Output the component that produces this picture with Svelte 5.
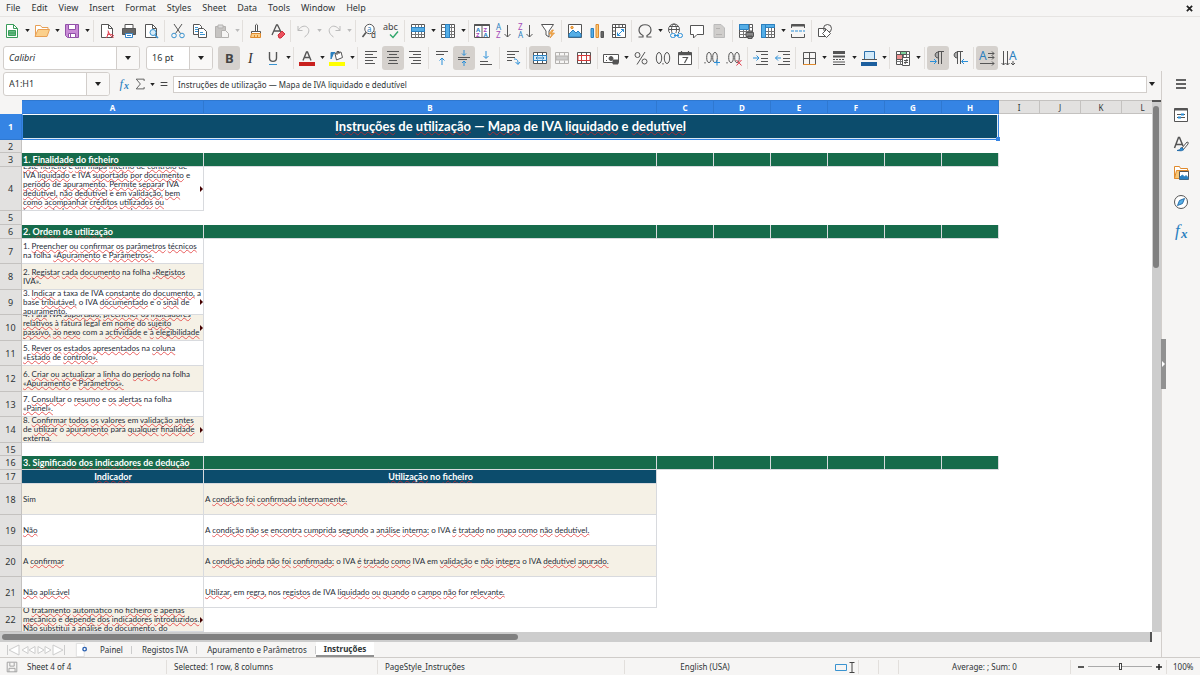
<script lang="ts">
	type Tool = {
		icon: string;
		label: string;
		menu?: boolean;
		pressed?: boolean;
		disabled?: boolean;
		gap?: 'wide' | 'tight';
	};
	type Row = { n: number; h: number; kind: string; a?: string[]; b?: string; more?: boolean };

	const menus = ['File', 'Edit', 'View', 'Insert', 'Format', 'Styles', 'Sheet', 'Data', 'Tools', 'Window', 'Help'];

	const page = '<path d="M2.5 1.5h7l4 4v9h-11z" fill="#fff"/><path d="M9.5 1.5v4h4"/>';
	const table = '<path d="M1.5 1.5h13v13h-13z" fill="#fff"/><path d="M1.5 4.5h13M1.5 8.5h13M1.5 11.5h13M5.5 1.5v13M8.5 1.5v13M11.5 1.5v13" stroke="#777"/>';
	const merge = '<path d="M1.5 2.5h13v11h-13z" fill="#fff"/><path d="M1.5 5.5h13M1.5 10.5h13M5.5 2.5v3M10.5 2.5v3M5.5 10.5v3M10.5 10.5v3"/>';
	const pilcrow = '<path d="M8.5 14V2M11.5 14V2M14 1.5H8"/><path d="M8.5 2C4 2 4 8 8.5 8z" fill="#aaa"/>';

	const icons: Record<string, string> = {
		new: '<g stroke="#3a9c5a"><path d="M2.5 1.5h7l4 4v9h-11z" fill="#fff"/><path d="M9.5 1.5v4h4"/><path d="M4.5 7.5h7v5h-7zM4.5 10h7" fill="#63bb80"/></g>',
		open: '<path d="M1.5 13.5v-11h5l1.5 2h6v3" stroke="#e8a055" fill="#fff"/><path d="M1 13.500l3-7h11.500l-2.500 7z" stroke="#e8a055" fill="#fbd08c"/>',
		save: '<g stroke="#9150a8"><path d="M1.5 1.5h13v13h-11l-2-2z" fill="#c98bd6"/><path d="M4.5 1.5h7v5h-7z" fill="#fff"/><path d="M4.5 14.5v-4h7v4z" fill="#fff"/><path d="M6.5 11v3"/></g>',
		pdf: page + '<path d="M7 15c2-2 3-6 2-7.500M8 12c2-1 5-1 7 1M9.500 9c1 3 3 5 5 5.500" stroke="#e0394a"/>',
		print: '<path d="M4 5V1.500h8V5" fill="#fff"/><path d="M1.500 5.500h13v6h-13z" fill="#666"/><path d="M4.500 10.500h7v4h-7z" fill="#fff" stroke="#3584c8"/><path d="M6 12.500h4" stroke="#3584c8"/>',
		preview: page + '<circle cx="10" cy="9.500" r="3" fill="#d8ecf8" stroke="#3a93d0"/><path d="M12 12l3 3" stroke="#3a93d0" stroke-width="1.600"/>',
		cut: '<path d="M4 1l6.500 9.500M12 1L5.500 10.500"/><circle cx="4" cy="12.500" r="2.300" stroke="#3a93d0"/><circle cx="12" cy="12.500" r="2.300" stroke="#3a93d0"/>',
		copy: '<path d="M1.500 1.500h6l2 2v8h-8z" fill="#fff"/><path d="M6.500 5.500h5l3 3v6h-8z" fill="#fff"/><path d="M3 4.500h3M3 6.500h3M3 8.500h3M8 9.500h3M8 11.500h5" stroke="#3a93d0"/>',
		paste: '<g stroke="#b4b2b0"><path d="M1.500 3.500h10v11h-10z" fill="#c6c4c2"/><path d="M4 2h5v3H4z" fill="#ddd"/><path d="M7.500 7.500h4l3 3v4h-7z" fill="#f6f5f4"/></g>',
		brush: '<path d="M7.500 8V2q1-1.500 2 0v6M3.500 8.500h9v2h-9z" fill="#fff"/><path d="M3.500 10.500h9v4h-10z" fill="#fbd08c" stroke="#e08a2c"/><path d="M6.500 12v2M9.500 12v2" stroke="#e08a2c"/>',
		clear: '<path d="M2 12L6.500 2h1L11 9M4 8h6" stroke-width="1.300"/><path d="M8 12l4-4 3 3-4 4H9z" fill="#ec5360" stroke="#cf2f3b"/>',
		undo: '<path d="M2 3v4.500h4.500M2 7.500C5 3 9 2 11.500 4.500S13 11 8.500 14" stroke="#bbb"/>',
		redo: '<path d="M14 3v4.500H9.500M14 7.500C11 3 7 2 4.500 4.500S3 11 7.500 14" stroke="#bbb"/>',
		find: '<circle cx="8.500" cy="6" r="4.700" fill="#fff"/><path d="M5 9.500L1.500 14" stroke-width="1.600"/><text x="6" y="8.500" font-size="8" fill="#2a80c0">a</text><text x="10" y="15" font-size="8" fill="#444">d</text>',
		spell: '<text x="0" y="7" font-size="9" fill="#444">abc</text><path d="M7 11.500l3 3 5-6" stroke="#2fa56a" stroke-width="1.400"/>',
		rows: table + '<path d="M1.500 4.500h13v4h-13z" fill="#55aee6" stroke="#2a80c0"/>',
		cols: table + '<path d="M5.500 1.500h4v13h-4z" fill="#55aee6" stroke="#2a80c0"/>',
		sort: '<path d="M.5 1.500h15v13H.5zM8 2v12" fill="#fff"/><path d="M.5 2h15" stroke-width="2"/><g font-size="6" font-weight="bold"><text x="2" y="9" fill="#2a80c0">A</text><text x="2" y="14" fill="#a44bb8">Z</text><text x="9.500" y="9" fill="#a44bb8">Z</text><text x="9.500" y="14" fill="#2a80c0">A</text></g>',
		asc: '<text x="0" y="7" font-size="8" fill="#2a80c0">A</text><text x="0" y="15" font-size="8" fill="#a44bb8">Z</text><path d="M11.500 2v12M8.500 11l3 3 3-3"/>',
		desc: '<text x="0" y="7" font-size="8" fill="#a44bb8">Z</text><text x="0" y="15" font-size="8" fill="#2a80c0">A</text><path d="M11.500 2v12M8.500 11l3 3 3-3"/>',
		filter: '<path d="M1.500 1.500h12L9 8v6l-3-2V8z" fill="#fff"/><path d="M12 7l-3 4h3l-2 4 4.500-5h-3l2-3z" fill="#f8b75c" stroke="#e08a2c" stroke-width=".7"/>',
		image: '<path d="M1.500 1.500h13v13h-13z" fill="#fff"/><path d="M2 14v-3l4-4 3 3 2-2 3 3v3z" fill="#55aee6" stroke="#2a80c0"/><circle cx="5" cy="4.500" r="1.200" fill="#f8b75c" stroke="#e08a2c"/>',
		chart: '<path d="M2 5.500h2.500v9H2z" fill="#55aee6" stroke="#2a80c0"/><path d="M7 1.500h2.500v13H7z" fill="#f8c878" stroke="#e08a2c"/><path d="M12 8.500h2.500v6H12z" fill="#666"/>',
		pivot: '<path d="M1.500 1.500h13v13h-13z" fill="#fff"/><path d="M1.500 4.500h13M4.500 1.500v13M8 2v2M11.500 2v2M2 8h2M2 11.500h2"/><path d="M6.500 9.500v3h3M10 6.500h2.500V9M6.500 12.500l6-6" stroke="#2a8fd8"/>',
		omega: '<path d="M1.500 14H6v-1.500C3 11 2 9 2 7c0-7 12-7 12 0 0 2-1 4-4 5.500V14h4.500" stroke-width="1.200"/>',
		link: '<circle cx="7" cy="6.500" r="5.500" fill="#fff"/><ellipse cx="7" cy="6.500" rx="2.500" ry="5.500"/><path d="M1.500 6.500h11M2.500 3.500h9"/><path d="M3 10h12v5H3z" fill="#f6f5f4" stroke="none"/><rect x="3.500" y="10.500" width="5" height="4" rx="2" stroke="#2a8fd8"/><rect x="10.500" y="10.500" width="5" height="4" rx="2" stroke="#2a8fd8"/><path d="M7 12.500h5" stroke="#2a8fd8"/>',
		comment: '<path d="M1.500 2.500h13v9H8l-3.500 3.500v-3.500h-3z" fill="#fff"/>',
		header: '<path d="M3 1.500h7l3.500 3.500v9.500H3z" fill="#d0cecc" stroke="#bbb"/><path d="M5 5.500h4M5 11.500h6" stroke="#b4b2b0"/>',
		area: table + '<path d="M1.500 1.500h9v5h-9z" fill="#55aee6" stroke="#2a80c0"/><path d="M8 9.500h7.500v4H8zM10 8h4v2M10 13h4v2.500h-4z" fill="#888"/>',
		freeze: table + '<path d="M1.500 1.500h4v13h-4zM5.500 1.500h9v3h-9z" fill="#55aee6" stroke="#2a80c0"/>',
		split: '<path d="M1.500 5V1.500h13V5M1.500 11v3.500h13V11"/><path d="M1.500 2.500h13" stroke-width="2"/><path d="M1 8h14" stroke="#2a8fd8" stroke-dasharray="3 1"/>',
		shapes: '<path d="M1.500 5.500h7v8h-7z" fill="#fff"/><circle cx="10.500" cy="5.500" r="4"/><path d="M9.500 6.500l4 4-4 4-4-4z" fill="#fff"/>',
		bold: '<text x="4" y="13" font-size="13" font-weight="bold" fill="#444">B</text>',
		italic: '<text x="5" y="13" font-size="14" font-style="italic" font-family="Liberation Serif, serif" fill="#333">I</text>',
		underline: '<path d="M4.500 2v6c0 4.500 7 4.500 7 0V2" stroke-width="1.400"/><path d="M4 14.500h8" stroke="#3a93d0"/>',
		color: '<path d="M4 10.500L7.500 2h1l3.500 8.500M5.500 7.500h5" stroke-width="1.400"/><path d="M0 12h16v4H0z" fill="#c9211e" stroke="none"/>',
		fill: '<path d="M6 3.500l6-1.500 1.500 5.500-6 2.500z" fill="#fff"/><path d="M8 5V1.500h2V4"/><path d="M2 9V2.500h4L4 4.500z" fill="#2a80c0" stroke="#2a80c0"/><path d="M0 12h16v4H0z" fill="#ff0" stroke="none"/>',
		left: '<path d="M2 1.500h12M2 4.500h8M2 7.500h12M2 10.500h8M2 13.500h10"/>',
		center: '<path d="M2 1.500h12M4 4.500h8M2 7.500h12M4 10.500h8M3 13.500h10"/>',
		right: '<path d="M2 1.500h12M6 4.500h8M2 7.500h12M6 10.500h8M4 13.500h10"/>',
		top: '<path d="M2 1.500h12M2 4.500h8"/><path d="M8 15V8M5.500 10.500L8 8l2.500 2.500" stroke="#2a8fd8"/>',
		middle: '<path d="M2 7.500h12M2 9.500h9"/><path d="M8 0v5M6 3.500l2 2 2-2M8 16v-5M6 13l2-2 2 2" stroke="#2a8fd8"/>',
		bottom: '<path d="M2 11.500h8M2 14.500h12"/><path d="M8 1v7M5.500 6L8 8.500 10.500 6" stroke="#2a8fd8"/>',
		wrap: '<path d="M2 1.500h12M2 4.500h8M2 7.500h8M2 10.500h5"/><path d="M9 9c4 0 4 2 4 5M10.500 12l2.500 2.500 2-2.500" stroke="#2a8fd8"/>',
		merge: merge + '<path d="M1.500 5.500h13v5h-13z" fill="#d2eafa" stroke="#2a80c0"/><path d="M4 8h8M5.500 6.500L4 8l1.500 1.500M10.500 6.500L12 8l-1.500 1.500" stroke="#2a80c0"/>',
		mergeoff: '<g stroke="#b4b2b0"><path d="M1.500 2.500h13v11h-13z"/><path d="M2 6h12v4H2z" fill="#ccc"/><path d="M5.500 2.500v3M10.500 2.500v3M5.500 10.500v3M10.500 10.500v3"/></g>',
		unmerge: merge + '<path d="M2 5.500h12v5H2zM5.500 5.500v5M10.500 5.500v5" stroke="#d43a3a"/>',
		currency: '<path d="M.5 4.500h15v8H.5z" fill="#fff"/><circle cx="8" cy="8.500" r="2" fill="#555"/><path d="M3 6.500h1M3 10.500h1M10 12.500V10h5v4h-5z" fill="#555"/>',
		percent: '<circle cx="4.500" cy="5" r="2.500"/><circle cx="11.500" cy="11.500" r="2.500"/><path d="M12 2L4 14.500"/>',
		number: '<ellipse cx="4" cy="8" rx="2.700" ry="5.500"/><ellipse cx="12" cy="8" rx="2.700" ry="5.500"/><path d="M8 13v1.500"/>',
		date: '<path d="M1.500 2.500h13v12h-13z" fill="#fff"/><path d="M1.500 4h13" stroke-width="2.500"/><path d="M5.500 7.500h5L7.500 13M4.500 1v2M11.500 1v2" stroke-width="1.200"/>',
		decadd: '<ellipse cx="5" cy="7.500" rx="2.300" ry="5"/><ellipse cx="11" cy="7.500" rx="2.300" ry="5"/><path d="M1 12v1.500"/><path d="M13 9.500v6M10 12.500h6" stroke="#2a8fd8"/>',
		decdel: '<ellipse cx="5" cy="7.500" rx="2.300" ry="5"/><ellipse cx="11" cy="7.500" rx="2.300" ry="5"/><path d="M1 12v1.500"/><path d="M10.500 10l5 5.500M15.500 10l-5 5.500" stroke="#e0394a"/>',
		indent: '<path d="M3 1.500h12M8 4.500h7M8 8.500h7M8 11.500h7M3 14.500h12"/><path d="M0 8h5.500M3.500 5.500L6 8l-2.500 2.500" stroke="#2a8fd8"/>',
		outdent: '<path d="M3 1.500h12M8 4.500h7M8 8.500h7M8 11.500h7M3 14.500h12"/><path d="M6 8H.5M3 5.500L.5 8 3 10.500" stroke="#2a8fd8"/>',
		border: '<path d="M2.500 14V2.500h12V14M8.500 3v11M3 8.500h11"/><path d="M2 14.500h13" stroke="#e08a2c"/>',
		lines: '<path d="M2 2.500h12" stroke-width="3"/><path d="M2 6.500h12" stroke-width="2"/><path d="M2 9.500h12" stroke-dasharray="2 1"/><path d="M2 12h12"/><path d="M2 14.500h12"/>',
		bcolor: '<path d="M3.500 1.500h10v8h-10z" fill="#d2eafa" stroke="#2a6faa"/><path d="M1 9.500h15" stroke="#555"/><path d="M0 12h16v4H0z" fill="#1c5f9e" stroke="none"/>',
		cond: table + '<path d="M5.500 1.500h6v3h-6z" fill="#7fd09b"/><path d="M1.500 4.500h6v5h-6z" fill="#f09090"/><path d="M7.500 7.500h7v8h-7z" fill="#fff"/><path d="M9 10.500h4M9 12.500h4M12 9l-2 5"/>',
		ltr: pilcrow + '<path d="M0 11.500h6M4 9l2.500 2.500L4 14" stroke="#2a8fd8"/>',
		rtl: '<path d="M5.500 14V2M8.500 14V2M11 1.500H5"/><path d="M5.500 2C1 2 1 8 5.500 8z" fill="#aaa"/><path d="M16 11.500h-6M12 9l-2.500 2.500L12 14" stroke="#2a8fd8"/>',
		horiz: '<text x="0" y="10" font-size="12" fill="#2a80c0">A</text><path d="M9 3.500h6M9 7.500h6M1 13.500h14M13 1.500l2 2-2 2M13 5.500l2 2-2 2M13 11.500l2 2-2 2"/>',
		vert: '<text x="8" y="10" font-size="12" fill="#2a80c0">A</text><path d="M2.500 1v14M6.500 1v14M12 11v4M.5 13l2 2 2-2M4.500 13l2 2 2-2M10 13l2 2 2-2"/>',
		fx: '<text x="2" y="13" font-size="17" font-style="italic" font-family="Liberation Serif, serif" fill="#2a80c0">f</text><text x="8" y="15" font-size="13" font-style="italic" font-family="Liberation Serif, serif" font-weight="bold" fill="#2a80c0">x</text>',
		sigma: '<path d="M13.500 4V1.500H3L8.500 8 3 14.500h10.500V12" stroke-width="1.200"/>',
		equals: '<path d="M3.500 6h9M3.500 10h9" stroke="#444" stroke-width="1.600"/>',
		menu: '<path d="M3 4h10M3 8h10M3 12h10" stroke="#333" stroke-width="1.500"/>',
		props: '<path d="M1.500 1.500h13v13h-13z" fill="#fff"/><path d="M1.500 2.500h13" stroke-width="2"/><path d="M4 7.500h8M4 10.500h8" /><path d="M8 7.500h3M5 10.500h3" stroke="#2a8fd8" stroke-width="2"/>',
		styles: '<path d="M1.500 12L5.500 1.500h1L10 10M3 8.500h6" stroke-width="1.500"/><path d="M9 12l5-6q2 0 1 2l-5 6z" fill="#fff"/><path d="M4 14.500q4 0 4-3l3 2q-2 2-7 1z" fill="#2a8fd8" stroke="#2a6faa"/>',
		gallery: '<path d="M1.500 13.500v-12h5l1 2h7v2" fill="#fff" stroke="#e08a2c"/><path d="M1.500 13.500l2-8h12v8z" fill="#f8c878" stroke="#e08a2c"/><path d="M6.500 6.500h9v8h-9z" fill="#fff"/><path d="M7 14v-2l2.500-2 2 2 1.500-1.500 2 2V14z" fill="#2a80c0" stroke="#2a80c0"/>',
		navigator: '<circle cx="8" cy="8" r="6.500" fill="#fff"/><path d="M11.500 4.500l-2 5-5 2 2-5z" fill="#55aee6" stroke="#2a6faa"/>',
		disk: '<path d="M2.500 2.500h11v11h-11zM5.500 3v4h5V3M4.500 13.500v-4h7v4" stroke="#999"/>',
		addsheet: '<path d="M1.500 .5h9v15h-9z" fill="#fff" stroke="#ddd"/><circle cx="11" cy="7" r="2" fill="#fff" stroke="#2a60b0" stroke-width="1.600"/>'
	};

	const standard: Tool[] = [
		{ icon: 'new', label: 'New', menu: true },
		{ icon: 'open', label: 'Open', menu: true },
		{ icon: 'save', label: 'Save', menu: true },
		{ icon: 'pdf', label: 'Export as PDF', gap: 'wide' },
		{ icon: 'print', label: 'Print' },
		{ icon: 'preview', label: 'Print Preview' },
		{ icon: 'cut', label: 'Cut', gap: 'wide' },
		{ icon: 'copy', label: 'Copy' },
		{ icon: 'paste', label: 'Paste', menu: true, disabled: true },
		{ icon: 'brush', label: 'Clone Formatting', gap: 'tight' },
		{ icon: 'clear', label: 'Clear Formatting' },
		{ icon: 'undo', label: 'Undo', menu: true, disabled: true, gap: 'tight' },
		{ icon: 'redo', label: 'Redo', menu: true, disabled: true },
		{ icon: 'find', label: 'Find and Replace', gap: 'wide' },
		{ icon: 'spell', label: 'Spelling' },
		{ icon: 'rows', label: 'Row', menu: true, gap: 'wide' },
		{ icon: 'cols', label: 'Column', menu: true },
		{ icon: 'sort', label: 'Sort', gap: 'tight' },
		{ icon: 'asc', label: 'Sort Ascending' },
		{ icon: 'desc', label: 'Sort Descending' },
		{ icon: 'filter', label: 'AutoFilter' },
		{ icon: 'image', label: 'Insert Image', gap: 'wide' },
		{ icon: 'chart', label: 'Insert Chart' },
		{ icon: 'pivot', label: 'Pivot Table' },
		{ icon: 'omega', label: 'Special Character', menu: true, gap: 'tight' },
		{ icon: 'link', label: 'Hyperlink' },
		{ icon: 'comment', label: 'Comment' },
		{ icon: 'header', label: 'Headers and Footers', disabled: true },
		{ icon: 'area', label: 'Define Print Area', gap: 'wide' },
		{ icon: 'freeze', label: 'Freeze Rows and Columns', menu: true },
		{ icon: 'split', label: 'Split Window' },
		{ icon: 'shapes', label: 'Show Draw Functions', gap: 'wide' }
	];

	const formatting: Tool[] = [
		{ icon: 'bold', label: 'Bold', pressed: true },
		{ icon: 'italic', label: 'Italic' },
		{ icon: 'underline', label: 'Underline', menu: true },
		{ icon: 'color', label: 'Font Color', menu: true, gap: 'tight' },
		{ icon: 'fill', label: 'Background Color', menu: true },
		{ icon: 'left', label: 'Align Left', gap: 'tight' },
		{ icon: 'center', label: 'Center Horizontally', pressed: true },
		{ icon: 'right', label: 'Align Right' },
		{ icon: 'top', label: 'Align Top', gap: 'wide' },
		{ icon: 'middle', label: 'Center Vertically', pressed: true },
		{ icon: 'bottom', label: 'Align Bottom' },
		{ icon: 'wrap', label: 'Wrap Text', gap: 'wide' },
		{ icon: 'merge', label: 'Merge and Center', pressed: true, gap: 'wide' },
		{ icon: 'mergeoff', label: 'Merge Cells', disabled: true },
		{ icon: 'unmerge', label: 'Unmerge Cells' },
		{ icon: 'currency', label: 'Format as Currency', menu: true, gap: 'wide' },
		{ icon: 'percent', label: 'Format as Percent' },
		{ icon: 'number', label: 'Format as Number' },
		{ icon: 'date', label: 'Format as Date' },
		{ icon: 'decadd', label: 'Add Decimal Place', gap: 'wide' },
		{ icon: 'decdel', label: 'Delete Decimal Place' },
		{ icon: 'indent', label: 'Increase Indent', gap: 'wide' },
		{ icon: 'outdent', label: 'Decrease Indent' },
		{ icon: 'border', label: 'Borders', menu: true, gap: 'tight' },
		{ icon: 'lines', label: 'Border Style', menu: true },
		{ icon: 'bcolor', label: 'Border Color', menu: true },
		{ icon: 'cond', label: 'Conditional', menu: true, gap: 'tight' },
		{ icon: 'ltr', label: 'Left-To-Right', pressed: true, gap: 'wide' },
		{ icon: 'rtl', label: 'Right-To-Left' },
		{ icon: 'horiz', label: 'Text direction from left to right', pressed: true, gap: 'wide' },
		{ icon: 'vert', label: 'Text direction from top to bottom' }
	];

	const sidebar = [
		['props', 'Properties'],
		['styles', 'Styles'],
		['gallery', 'Gallery'],
		['navigator', 'Navigator'],
		['fx', 'Functions']
	];

	const columns = 'ABCDEFGHIJKL'.split('');
	const filler = 'CDEFGH'.split('');
	const title = 'Instruções de utilização — Mapa de IVA liquidado e dedutível';

	const rows: Row[] = [
		{ n: 1, h: 26, kind: 'title' },
		{ n: 2, h: 13, kind: 'blank' },
		{ n: 3, h: 14, kind: 'section', a: ['1. Finalidade do ficheiro'] },
		{
			n: 4,
			h: 44,
			kind: 'note',
			more: true,
			a: [
				'Este ficheiro é um mapa interno de controlo de',
				'IVA liquidado e IVA suportado por documento e',
				'período de apuramento. Permite separar IVA',
				'dedutível, não dedutível e em validação, bem',
				'como acompanhar créditos utilizados ou',
				'transportados com referência de origem.'
			]
		},
		{ n: 5, h: 14, kind: 'blank' },
		{ n: 6, h: 14, kind: 'section', a: ['2. Ordem de utilização'] },
		{ n: 7, h: 25, kind: 'note', a: ['1. Preencher ou confirmar os parâmetros técnicos', 'na folha «Apuramento e Parâmetros».'] },
		{ n: 8, h: 26, kind: 'note shade', a: ['2. Registar cada documento na folha «Registos', 'IVA».'] },
		{
			n: 9,
			h: 25,
			kind: 'note',
			more: true,
			a: ['3. Indicar a taxa de IVA constante do documento, a', 'base tributável, o IVA documentado e o sinal de', 'apuramento.']
		},
		{
			n: 10,
			h: 26,
			kind: 'note shade',
			more: true,
			a: ['4. Para IVA suportado, preencher os indicadores', 'relativos à fatura legal em nome do sujeito', 'passivo, ao nexo com a actividade e à elegibilidade', 'interna.']
		},
		{ n: 11, h: 25, kind: 'note', a: ['5. Rever os estados apresentados na coluna', '«Estado de controlo».'] },
		{ n: 12, h: 26, kind: 'note shade', a: ['6. Criar ou actualizar a linha do período na folha', '«Apuramento e Parâmetros».'] },
		{ n: 13, h: 25, kind: 'note', a: ['7. Consultar o resumo e os alertas na folha', '«Painel».'] },
		{
			n: 14,
			h: 26,
			kind: 'note shade',
			more: true,
			a: ['8. Confirmar todos os valores em validação antes', 'de utilizar o apuramento para qualquer finalidade', 'externa.']
		},
		{ n: 15, h: 13, kind: 'blank' },
		{ n: 16, h: 14, kind: 'section', a: ['3. Significado dos indicadores de dedução'] },
		{ n: 17, h: 14, kind: 'head', a: ['Indicador'], b: 'Utilização no ficheiro' },
		{ n: 18, h: 31, kind: 'pair shade', a: ['Sim'], b: 'A condição foi confirmada internamente.' },
		{ n: 19, h: 31, kind: 'pair', a: ['Não'], b: 'A condição não se encontra cumprida segundo a análise interna: o IVA é tratado no mapa como não dedutível.' },
		{ n: 20, h: 31, kind: 'pair shade', a: ['A confirmar'], b: 'A condição ainda não foi confirmada: o IVA é tratado como IVA em validação e não integra o IVA dedutível apurado.' },
		{ n: 21, h: 31, kind: 'pair', a: ['Não aplicável'], b: 'Utilizar, em regra, nos registos de IVA liquidado ou quando o campo não for relevante.' },
		{
			n: 22,
			h: 24,
			kind: 'note shade',
			more: true,
			a: ['O tratamento automático no ficheiro é apenas', 'mecânico e depende dos indicadores introduzidos.', 'Não substitui a análise do documento, do']
		}
	];

	const tabs = ['Painel', 'Registos IVA', 'Apuramento e Parâmetros', 'Instruções'];

	// words the English dictionary lets through
	const known = new Set('IVA A O a o e em no do de na com para folha taxa legal nos for base Sim fatura'.split(' '));

	function isKnown(word: string) {
		const bare = word.replace(/[«».,:]/g, '');
		return !/[a-zà-ú]/i.test(bare) || known.has(bare);
	}

	let zoom = $state(100);
	let fontName = $state('Calibri');
	let fontSize = $state('16 pt');
	let nameBox = $state('A1:H1');
	let formula = $state(title);
</script>

{#snippet glyph(name: string)}
	<svg viewBox="0 0 16 16" fill="none" stroke="#555" aria-hidden="true"><g class="art">{@html icons[name]}</g></svg>
{/snippet}

{#snippet arrow()}
	<svg class="arrow" viewBox="0 0 6 4" aria-hidden="true"><path d="M0 0h6L3 4z" /></svg>
{/snippet}

{#snippet spelled(text: string)}
	{#each text.split(' ') as word, i}{i ? ' ' : ''}{#if isKnown(word)}{word}{:else}<span class="typo">{word}</span>{/if}{/each}
{/snippet}

{#snippet tools(list: Tool[])}
	{#each list as tool}
		{#if tool.gap}<span class="gap {tool.gap}"></span>{/if}
		<button class="tool" class:pressed={tool.pressed} disabled={tool.disabled} aria-label={tool.label}>
			{@render glyph(tool.icon)}
		</button>
		{#if tool.menu}
			<button class="drop" disabled={tool.disabled} aria-label="{tool.label} options">{@render arrow()}</button>
		{/if}
	{/each}
{/snippet}

<div class="window">
	<nav class="menubar">
		{#each menus as item}<button>{item}</button>{/each}
		<button class="close" aria-label="Close document">
			<svg viewBox="0 0 8 8"><path d="M1 1l6 6M7 1L1 7" stroke="#222" stroke-width="2" /></svg>
		</button>
	</nav>

	<div class="toolbar">{@render tools(standard)}</div>

	<div class="toolbar">
		<div class="combo font">
			<input aria-label="Font Name" bind:value={fontName} />
			<button aria-label="Font list">{@render arrow()}</button>
		</div>
		<div class="combo size">
			<input aria-label="Font Size" bind:value={fontSize} />
			<button aria-label="Size list">{@render arrow()}</button>
		</div>
		{@render tools(formatting)}
	</div>

	<div class="body">
		<main>
			<div class="formula">
				<div class="combo cellname">
					<input aria-label="Name Box" bind:value={nameBox} />
					<button aria-label="Manage names">{@render arrow()}</button>
				</div>
				<button class="small" aria-label="Function Wizard">{@render glyph('fx')}</button>
				<button class="small" aria-label="Select Function">{@render glyph('sigma')}</button>
				<button class="drop" aria-label="Function list">{@render arrow()}</button>
				<button class="small" aria-label="Formula">{@render glyph('equals')}</button>
				<input class="line" aria-label="Input line" bind:value={formula} />
				<button class="expand" aria-label="Expand Formula Bar">{@render arrow()}</button>
			</div>

			<div class="sheet">
				<div class="cells">
					<table>
						<colgroup>
							<col class="w-num" /><col class="w-a" /><col class="w-b" />
							{#each filler as _}<col class="w-c" />{/each}
							<col class="w-i" /><col class="w-i" /><col class="w-i" /><col />
						</colgroup>
						<thead>
							<tr>
								<th class="corner"></th>
								{#each columns as col, i}<th scope="col" class:on={i < 8}>{col}</th>{/each}
							</tr>
						</thead>
						<tbody>
							{#each rows as row}
								<tr class={row.kind} style:height="{row.h}px">
									<th scope="row" class:on={row.n === 1}>{row.n}</th>
									{#if row.kind === 'title'}
										<td class="merged" colspan="8">
											<div class="selection">{@render spelled(title)}<i class="handle"></i></div>
										</td>
									{:else if row.kind !== 'blank'}
										<td>
											<div class="text" style:height="{row.h - 1}px">
												{#each row.a ?? [] as line}<div>{@render spelled(line)}</div>{/each}
												{#if row.more}<i class="more"></i>{/if}
											</div>
										</td>
										{#if row.b}
											<td><div class="text" style:height="{row.h - 1}px"><div>{@render spelled(row.b)}</div></div></td>
										{:else if row.kind === 'section'}
											<td></td>
											{#each filler as _}<td></td>{/each}
										{/if}
									{/if}
								</tr>
							{/each}
						</tbody>
					</table>
				</div>
				<div class="vscroll"><div class="thumb"></div></div>
			</div>

			<div class="hscroll"><div class="thumb"></div></div>

			<div class="tabs">
				<svg class="walk" viewBox="0 0 60 12" fill="#fff" stroke="#ccc" aria-hidden="true">
					<path d="M1.5 1v10M13 1v10L3 6zM22 2.500v7l-6-3.500zM29 2.500v7l-6-3.500zM32 2.500v7l6-3.500zM39 2.500v7l6-3.500zM47 1v10l10-5zM58.500 1v10" />
				</svg>
				<button class="add" aria-label="Add Sheet">{@render glyph('addsheet')}</button>
				{#each tabs as tab, i}
					<button class="tab" class:active={i === 3}>{tab}</button>
				{/each}
			</div>
		</main>

		<aside>
			<button class="top" aria-label="Sidebar Settings">{@render glyph('menu')}</button>
			{#each sidebar as [icon, label]}
				<button aria-label={label}>{@render glyph(icon)}</button>
			{/each}
			<div class="grip"></div>
		</aside>
	</div>

	<footer>
		<div class="doc">{@render glyph('disk')}<span>Sheet 4 of 4</span></div>
		<div>Selected: 1 row, 8 columns</div>
		<div>PageStyle_Instruções</div>
		<div class="mid plain">English (USA)</div>
		<div class="plain"></div>
		<div class="mode">
			<svg viewBox="0 0 20 12" fill="none" aria-hidden="true">
				<path d="M.5 3.500h11v6H.5z" stroke="#3a93d0" />
				<path d="M14.500 1.500h5M14.500 11.500h5M17 1.500v10" stroke="#444" />
			</svg>
		</div>
		<div></div>
		<div></div>
		<div class="mid">Average: ; Sum: 0</div>
		<div class="zoom">
			<button aria-label="Zoom Out" onclick={() => (zoom -= 5)}><svg viewBox="0 0 8 8"><path d="M1 4h6" stroke="#222" stroke-width="1.500" /></svg></button>
			<input type="range" min="20" max="180" aria-label="Zoom" bind:value={zoom} />
			<button aria-label="Zoom In" onclick={() => (zoom += 5)}><svg viewBox="0 0 8 8"><path d="M1 4h6M4 1v6" stroke="#222" stroke-width="1.500" /></svg></button>
		</div>
		<div class="percent">{zoom}%</div>
	</footer>
</div>

<style>
	:global(body) {
		margin: 0;
	}

	.window {
		display: flex;
		flex-direction: column;
		height: 100vh;
		overflow: hidden;
		background: #f6f5f4;
		color: #2e3436;
		font: 8px/12px 'Noto Sans', sans-serif;
	}

	button,
	input {
		box-sizing: border-box;
		margin: 0;
		padding: 0;
		border: 0;
		background: none;
		color: inherit;
		font: inherit;
		min-width: 0;
	}

	svg {
		display: block;
		flex: none;
		width: 16px;
		height: 16px;
		overflow: visible;
	}

	.art :global(text) {
		stroke: none;
	}

	.arrow {
		width: 5px;
		height: 3px;
		fill: #222;
	}

	.menubar {
		display: flex;
		flex: none;
		align-items: center;
		gap: 11px;
		box-sizing: border-box;
		height: 17px;
		padding: 0 7px 0 6px;
		border-bottom: 1px solid #e6e4e2;
		font-size: 9px;
	}

	.close {
		margin-left: auto;
	}

	.close svg {
		width: 7px;
		height: 7px;
	}

	.toolbar {
		display: flex;
		align-items: center;
		flex: none;
		height: 27px;
		padding-left: 1px;
	}

	.tool {
		display: flex;
		flex: none;
		align-items: center;
		justify-content: center;
		width: 22px;
		height: 24px;
		border-radius: 3px;
	}

	.pressed {
		background: #d5d1cd;
	}

	.drop {
		display: flex;
		flex: none;
		align-items: center;
		justify-content: center;
		width: 8px;
		height: 24px;
	}

	.drop:disabled .arrow {
		fill: #bbb;
	}

	.gap {
		flex: none;
		box-sizing: border-box;
		height: 22px;
		border-right: 1px solid #e2dfdc;
	}

	.wide {
		width: 3px;
		margin-right: 2px;
	}

	.tight {
		width: 2px;
		margin-right: 2px;
	}

	.combo {
		display: flex;
		flex: none;
		box-sizing: border-box;
		height: 24px;
		border: 1px solid #d2cecb;
		border-radius: 3px;
		background: #fff;
		overflow: hidden;
		font-size: 9px;
	}

	.combo input {
		flex: 1;
		padding-left: 5px;
	}

	.combo button {
		display: flex;
		align-items: center;
		justify-content: center;
		width: 23px;
		border-left: 1px solid #d2cecb;
		background: #f9f8f7;
	}

	.combo .arrow,
	.expand .arrow {
		width: 8px;
		height: 4px;
	}

	.font {
		width: 137px;
		margin: 0 6px 0 2px;
		font-style: italic;
	}

	.size {
		width: 67px;
		margin-right: 5px;
	}

	.body {
		display: flex;
		flex: 1;
		min-height: 0;
	}

	main {
		display: flex;
		flex: 1;
		flex-direction: column;
		min-width: 0;
	}

	.formula {
		display: flex;
		flex: none;
		align-items: center;
		box-sizing: border-box;
		height: 29px;
		padding: 0 5px 3px 3px;
	}

	.cellname {
		width: 107px;
		margin-right: 6px;
	}

	.small {
		display: flex;
		flex: none;
		align-items: center;
		justify-content: center;
		width: 16px;
		height: 16px;
	}

	.small svg {
		width: 12px;
		height: 12px;
	}

	.formula .drop + .small {
		margin-right: 1px;
	}

	.line {
		flex: 1;
		height: 17px;
		padding: 0 4px;
		border: 1px solid #d2cecb;
		background: #fff;
	}

	.expand {
		padding-left: 1px;
	}

	.sheet {
		display: flex;
		flex: 1;
		min-height: 0;
	}

	.cells {
		flex: 1;
		min-width: 0;
		overflow: hidden;
		background: #fff;
	}

	table {
		width: max(100%, 1164px);
		table-layout: fixed;
		border-collapse: separate;
		border-spacing: 0;
	}

	.w-num {
		width: 22px;
	}

	.w-a {
		width: 182px;
	}

	.w-b {
		width: 453px;
	}

	.w-c {
		width: 57px;
	}

	.w-i {
		width: 41px;
	}

	th,
	td {
		box-sizing: border-box;
		padding: 0;
	}

	th {
		border-right: 1px solid #c4c2c0;
		border-bottom: 1px solid #c4c2c0;
		background: #e2e1e0;
		font-weight: normal;
	}

	thead th {
		height: 14px;
		border-top: 1px solid #c4c2c0;
		line-height: 11px;
	}

	thead .corner {
		border: 0;
		background: #f6f5f4;
	}

	tbody th {
		font-size: 9px;
		line-height: 11px;
	}

	th.on {
		border-color: #2f78d0;
		background: #3584e4;
		color: #fff;
		font-weight: bold;
	}

	td {
		position: relative;
		border-right: 1px solid #d8dade;
		border-bottom: 1px solid #d8dade;
		color: #1f2d38;
		font-family: 'Lato', sans-serif;
		text-align: left;
	}

	.text {
		display: flex;
		flex-direction: column;
		justify-content: center;
		overflow: hidden;
		padding-left: 1px;
		line-height: 9px;
		white-space: nowrap;
	}

	.text div {
		flex: none;
	}

	.typo {
		text-decoration: underline wavy #e02020b0 1px;
		text-decoration-skip-ink: none;
		text-underline-offset: 0;
	}

	.shade td {
		background: #f5f1e6;
	}

	.section td {
		background: #166b4b;
		color: #fff;
		font-size: 9px;
		font-weight: bold;
	}

	.head td {
		background: #0c4c6c;
		color: #fff;
		font-size: 9px;
		font-weight: bold;
	}

	.head .text {
		align-items: center;
	}

	td.merged {
		border: 0;
	}

	.selection {
		position: relative;
		box-sizing: border-box;
		height: 26px;
		border: 1px solid #3584e4;
		border-top-color: #fff;
		background: #0c4c6c;
		box-shadow: inset -1px -1px #dce8f4;
		color: #fff;
		font-size: 13px;
		font-weight: bold;
		line-height: 23px;
		text-align: center;
	}

	.handle {
		position: absolute;
		right: -2px;
		bottom: -2px;
		width: 4px;
		height: 4px;
		background: #3584e4;
	}

	.more {
		position: absolute;
		top: 50%;
		right: 0;
		border: 3px solid transparent;
		border-right: 0;
		border-left-color: #400;
		transform: translateY(-50%);
	}

	.vscroll {
		box-sizing: border-box;
		width: 9px;
		padding: 4px 1px;
		border-top: 2px solid #555;
		background: #cdcdcd;
	}

	.vscroll .thumb {
		width: 6px;
		height: 31%;
		border-radius: 3px;
		background: #808080;
	}

	.hscroll {
		box-sizing: border-box;
		flex: none;
		height: 10px;
		margin-right: 9px;
		padding: 2px;
		border-right: 2px solid #555;
		background: #cdcdcd;
	}

	.hscroll .thumb {
		width: 45%;
		height: 6px;
		border-radius: 3px;
		background: #808080;
	}

	.tabs {
		display: flex;
		flex: none;
		align-items: center;
		height: 15px;
	}

	.walk {
		width: 60px;
		height: 12px;
		margin-left: 6px;
	}

	.add {
		margin: 0 0 0 8px;
	}

	.add svg {
		height: 14px;
	}

	.tab {
		height: 15px;
		padding: 0 9px 0 10px;
		background: linear-gradient(#ccc, #ccc) right / 1px 8px no-repeat;
	}

	.tab.active {
		padding: 0 8px;
		border-bottom: 2px solid #909090;
		background: #fff;
		font-weight: bold;
	}

	aside {
		position: relative;
		display: flex;
		flex: none;
		flex-direction: column;
		align-items: center;
		gap: 13px;
		box-sizing: border-box;
		width: 39px;
		padding-top: 5px;
		border-left: 1px solid #d2cecb;
	}

	aside .top {
		margin-bottom: 2px;
	}

	.grip {
		position: absolute;
		top: 268px;
		left: -1px;
		width: 5px;
		height: 50px;
		background: #919191;
	}

	.grip::after {
		position: absolute;
		top: 22px;
		left: 1px;
		border: 3px solid transparent;
		border-right: 0;
		border-left-color: #fff;
		content: '';
	}

	footer {
		display: grid;
		flex: none;
		grid-template-columns: 167fr 211fr 247fr 160fr 43fr 31fr 20fr 20fr 172fr 96fr 33fr;
		align-items: center;
		box-sizing: border-box;
		height: 18px;
		border-top: 1px solid #cfccc9;
		white-space: nowrap;
	}

	footer > div {
		display: flex;
		align-items: center;
		box-sizing: border-box;
		height: 14px;
		min-width: 0;
		padding-left: 7px;
		border-right: 1px solid #e2dfdc;
	}

	footer .plain,
	footer .percent {
		border-right: 0;
	}

	footer .doc {
		gap: 8px;
		padding-left: 5px;
	}

	.doc svg {
		width: 14px;
		height: 14px;
	}

	footer .mid {
		justify-content: center;
		padding: 0;
	}

	.mode svg {
		width: 20px;
		height: 12px;
	}

	footer .zoom {
		gap: 3px;
		padding: 0 3px 0 6px;
	}

	.zoom svg {
		width: 8px;
		height: 8px;
	}

	.zoom input {
		flex: 1;
		height: 10px;
		appearance: none;
		background: linear-gradient(#aaa, #aaa) center / 100% 1px no-repeat;
	}

	.zoom input::-webkit-slider-thumb {
		appearance: none;
		box-sizing: border-box;
		width: 3px;
		height: 7px;
		border: 1px solid #444;
		background: #fff;
	}

	footer .percent {
		padding-left: 6px;
	}
</style>
